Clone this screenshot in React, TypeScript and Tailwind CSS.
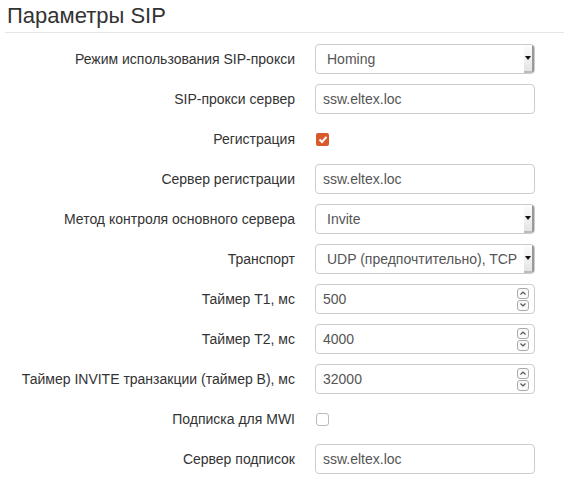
import type { ReactNode } from 'react'

type Field =
  | { kind: 'select'; label: string; value: string }
  | { kind: 'text'; label: string; value: string }
  | { kind: 'number'; label: string; value: string }
  | { kind: 'check'; label: string; checked: boolean }

const fields: Field[] = [
  { kind: 'select', label: 'Режим использования SIP-прокси', value: 'Homing' },
  { kind: 'text', label: 'SIP-прокси сервер', value: 'ssw.eltex.loc' },
  { kind: 'check', label: 'Регистрация', checked: true },
  { kind: 'text', label: 'Сервер регистрации', value: 'ssw.eltex.loc' },
  { kind: 'select', label: 'Метод контроля основного сервера', value: 'Invite' },
  { kind: 'select', label: 'Транспорт', value: 'UDP (предпочтительно), TCP' },
  { kind: 'number', label: 'Таймер T1, мс', value: '500' },
  { kind: 'number', label: 'Таймер T2, мс', value: '4000' },
  { kind: 'number', label: 'Таймер INVITE транзакции (таймер B), мс', value: '32000' },
  { kind: 'check', label: 'Подписка для MWI', checked: false },
  { kind: 'text', label: 'Сервер подписок', value: 'ssw.eltex.loc' },
]

function Box({ children }: { children: ReactNode }) {
  return (
    <div className="flex h-[30px] w-[220px] items-center overflow-hidden rounded-[4px] border border-[#ccc] bg-white text-[14px] text-[#555]">
      {children}
    </div>
  )
}

function Spinner() {
  return (
    <div className="mr-[5px] flex flex-col gap-[1px]">
      {[0, 1].map((i) => (
        <span
          className="flex h-[11px] w-[12px] items-center justify-center rounded-[3px] border border-[#aaa] bg-[#fafafa]"
          key={i}
        >
          <svg height="6" viewBox="0 0 8 6" width="8">
            <path
              d={i === 0 ? 'M1.5 4.5 L4 2 L6.5 4.5' : 'M1.5 1.5 L4 4 L6.5 1.5'}
              fill="none"
              stroke="#555"
              strokeWidth="1.2"
            />
          </svg>
        </span>
      ))}
    </div>
  )
}

function Control({ field }: { field: Field }) {
  if (field.kind === 'check') {
    return field.checked ? (
      <span className="ml-[1px] flex h-[13px] w-[13px] items-center justify-center rounded-[2px] bg-[#d9592b]">
        <svg height="9" viewBox="0 0 10 9" width="10">
          <path d="M1.5 4.5 L4 7 L8.5 1.8" fill="none" stroke="#fff" strokeWidth="2" />
        </svg>
      </span>
    ) : (
      <span className="ml-[1px] h-[13px] w-[13px] rounded-[3px] border border-[#bbb] bg-white" />
    )
  }

  if (field.kind === 'select') {
    return (
      <Box>
        <span className="flex-1 truncate pl-[11px]">{field.value}</span>
        <span className="flex h-full w-[10px] items-center justify-center border-r-[2px] border-b-[2px] border-r-[#999] border-b-[#bbb] bg-gradient-to-b from-[#fdfdfd] to-[#e4e4e4]">
          <svg height="4" viewBox="0 0 6 4" width="6">
            <path d="M0 0 H6 L3 4 Z" fill="#111" />
          </svg>
        </span>
      </Box>
    )
  }

  return (
    <Box>
      <span className="flex-1 pl-[7px]">{field.value}</span>
      {field.kind === 'number' ? <Spinner /> : null}
    </Box>
  )
}

export default function App() {
  return (
    <div className="min-h-[493px] w-[569px] bg-white px-[5px] font-['Liberation_Sans',Arial,sans-serif] text-[#333]">
      <h2 className="pl-[2px] pt-[3px] text-[22px] leading-[26px]">Параметры SIP</h2>
      <div className="mt-[3px] h-px bg-[#e5e5e5]" />

      <div className="mt-[6px]">
        {fields.map((field) => (
          <div className="flex h-[40px] items-center gap-[20px]" key={field.label}>
            <label className="w-[290px] text-right text-[14px]">{field.label}</label>
            <Control field={field} />
          </div>
        ))}
      </div>
    </div>
  )
}
